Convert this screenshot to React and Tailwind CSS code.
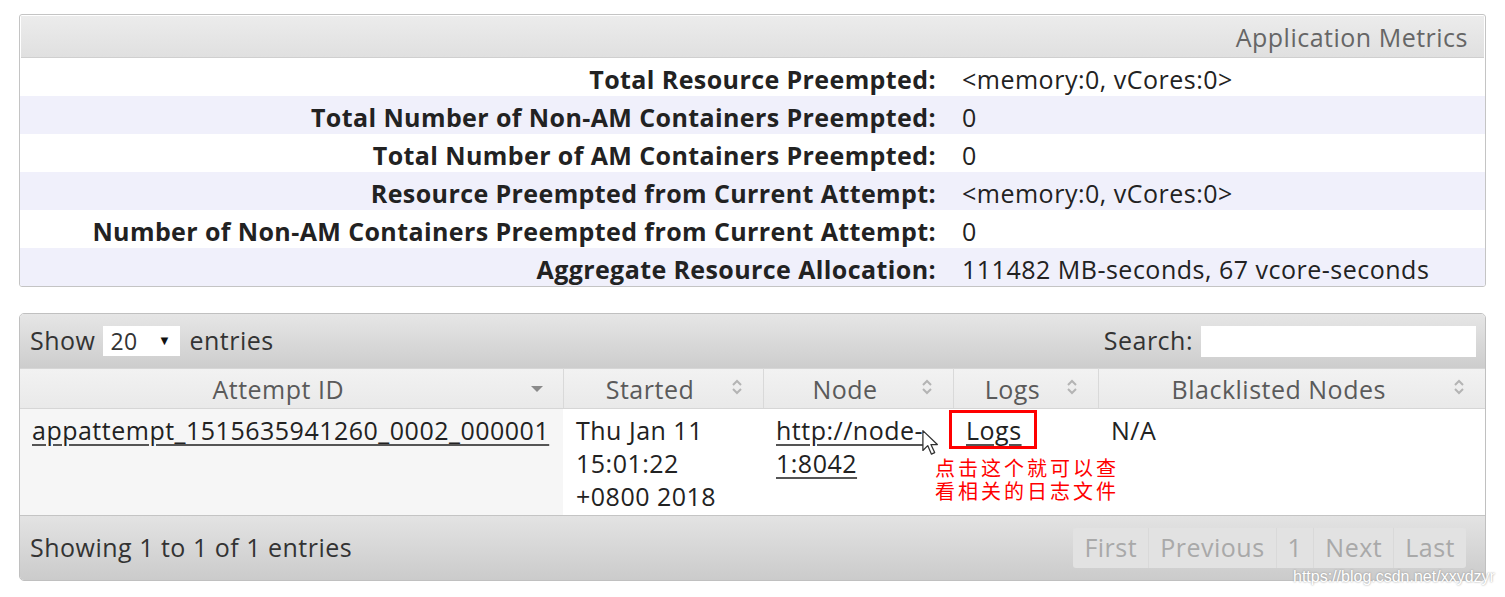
import React from 'react'

const metrics = [
  ['Total Resource Preempted:', '<memory:0, vCores:0>'],
  ['Total Number of Non-AM Containers Preempted:', '0'],
  ['Total Number of AM Containers Preempted:', '0'],
  ['Resource Preempted from Current Attempt:', '<memory:0, vCores:0>'],
  ['Number of Non-AM Containers Preempted from Current Attempt:', '0'],
  ['Aggregate Resource Allocation:', '111482 MB-seconds, 67 vcore-seconds'],
]

function SortBoth() {
  return (
    <svg width="12" height="18" viewBox="0 0 12 18" className="absolute right-[20px] top-[9px]">
      <path d="M2 7 L6 3 L10 7" fill="none" stroke="#b4b4b4" strokeWidth="2" />
      <path d="M2 11 L6 15 L10 11" fill="none" stroke="#b4b4b4" strokeWidth="2" />
    </svg>
  )
}

function SortDesc() {
  return (
    <svg width="14" height="10" viewBox="0 0 14 10" className="absolute right-[19px] top-[15px]">
      <path d="M1 2 L13 2 L7 8 Z" fill="#8a8a8a" />
    </svg>
  )
}

function Cursor() {
  return (
    <svg width="22" height="30" viewBox="0 0 20 28" className="absolute left-[-32px] top-[20px]">
      <path d="M1.5 1.5 L1.5 20 L6 15.5 L9.5 23.5 L12.5 22 L9 14.5 L15 14.5 Z" fill="#fff" stroke="#333" strokeWidth="1.2" strokeLinejoin="round" />
    </svg>
  )
}

export default function App() {
  return (
    <div className="relative min-h-screen bg-white pt-[14px] px-[19px] font-['Open_Sans','Noto_Sans',sans-serif] text-[25px] tracking-[0.5px] text-[#222]">
      {/* Application Metrics */}
      <div className="border border-[#c4c4c4] rounded-[3px] overflow-hidden">
        <div className="h-[42px] m-[1px] mb-0 border-b border-[#cfcfcf] bg-gradient-to-b from-[#ececec] to-[#e0e0e0] flex items-center justify-end pr-[16px] text-[#666] pt-[3px]">
          Application Metrics
        </div>
        {metrics.map(([label, value], i) => (
          <div
            key={label}
            className={
              'grid grid-cols-[926px_1fr] h-[38px] items-center pt-[3px] ' +
              (i % 2 === 1 ? 'bg-[#f0f0fb]' : 'bg-white')
            }
          >
            <div className="text-right font-bold pr-[10px] whitespace-nowrap tracking-[0.4px]">{label}</div>
            <div className="pl-[16px] whitespace-nowrap">{value}</div>
          </div>
        ))}
      </div>

      {/* Attempts table */}
      <div className="mt-[26px] border border-[#c0c0c0] rounded-[5px] overflow-hidden">
        <div className="h-[54px] bg-gradient-to-b from-[#e6e6e6] to-[#cdcdcd] flex items-center justify-between pl-[10px] pr-[9px] text-[#333]">
          <div className="flex items-center">
            <span>Show</span>
            <div className="ml-[8px] w-[77px] h-[30px] bg-white flex items-center justify-between pl-[7px] pr-[9px]">
              <span className="text-[23px]">20</span>
              <span className="text-[13px] text-[#111]">▼</span>
            </div>
            <span className="ml-[9px]">entries</span>
          </div>
          <div className="flex items-center">
            <span>Search:</span>
            <div className="ml-[8px] w-[275px] h-[31px] bg-white" />
          </div>
        </div>

        <table className="w-full table-fixed border-collapse">
          <colgroup>
            <col className="w-[543px]" />
            <col className="w-[200px]" />
            <col className="w-[190px]" />
            <col className="w-[145px]" />
            <col />
          </colgroup>
          <thead>
            <tr className="h-[40px] bg-gradient-to-b from-[#f2f2f2] to-[#e9e9e9] text-[#5a5a5a] font-normal">
              {['Attempt ID', 'Started', 'Node', 'Logs', 'Blacklisted Nodes'].map((h, i) => (
                <th
                  key={h}
                  className={
                    'relative font-normal text-center pr-[26px] border-t border-b border-[#d6d6d6] whitespace-nowrap ' +
                    (i < 4 ? 'border-r border-r-[#d9d9d9]' : '')
                  }
                >
                  <span className="relative top-[1px]">{h}</span>
                  {i === 0 ? <SortDesc /> : <SortBoth />}
                </th>
              ))}
            </tr>
          </thead>
          <tbody>
            <tr className="h-[106px] align-top leading-[33px]">
              <td className="bg-[#f6f6f6] pl-[12px] pt-[5px]">
                <a className="underline underline-offset-[4px] decoration-[#555] text-[#222] whitespace-nowrap">appattempt_1515635941260_0002_000001</a>
              </td>
              <td className="pl-[13px] pt-[5px]">
                Thu Jan 11<br />15:01:22<br />+0800 2018
              </td>
              <td className="pl-[13px] pt-[5px]">
                <a className="underline underline-offset-[4px] decoration-[#555] text-[#222]">http://node-<br />1:8042</a>
              </td>
              <td className="relative pl-[13px] pt-[5px]">
                <a className="underline underline-offset-[4px] decoration-[#555] text-[#222]">Logs</a>
                <div className="absolute left-[-4px] top-[1px] w-[88px] h-[39px] border-[3px] border-[#ff0000]" />
                <Cursor />
                <div className="absolute left-[-18px] top-[47px] w-[200px] text-[20px] leading-[23px] tracking-[3px] text-[#ff0000] font-['Noto_Sans_CJK_SC',sans-serif]">
                  <div>点击这个就可以查</div>
                  <div>看相关的日志文件</div>
                </div>
              </td>
              <td className="pl-[13px] pt-[5px]">N/A</td>
            </tr>
          </tbody>
        </table>

        <div className="h-[65px] border-t border-[#c4c4c4] bg-gradient-to-b from-[#e3e3e3] to-[#cbcbcb] flex items-center justify-between pl-[10px] pr-[19px] text-[#333]">
          <span>Showing 1 to 1 of 1 entries</span>
          <div className="flex h-[40px] bg-[#e2e2e2] rounded-[3px] text-[#a9a9a9]">
            {['First', 'Previous', '1', 'Next', 'Last'].map((p, i) => (
              <span
                key={p}
                className={'flex items-center px-[11px] ' + (i > 0 ? 'border-l border-[#d9d9d9]' : '')}
              >
                {p}
              </span>
            ))}
          </div>
        </div>
      </div>

      <div className="absolute left-[1293px] top-[565px] text-[16px] tracking-normal text-white font-['Liberation_Sans',sans-serif] [text-shadow:0_0_2px_#888]">
        https://blog.csdn.net/xxydzyr
      </div>
    </div>
  )
}
